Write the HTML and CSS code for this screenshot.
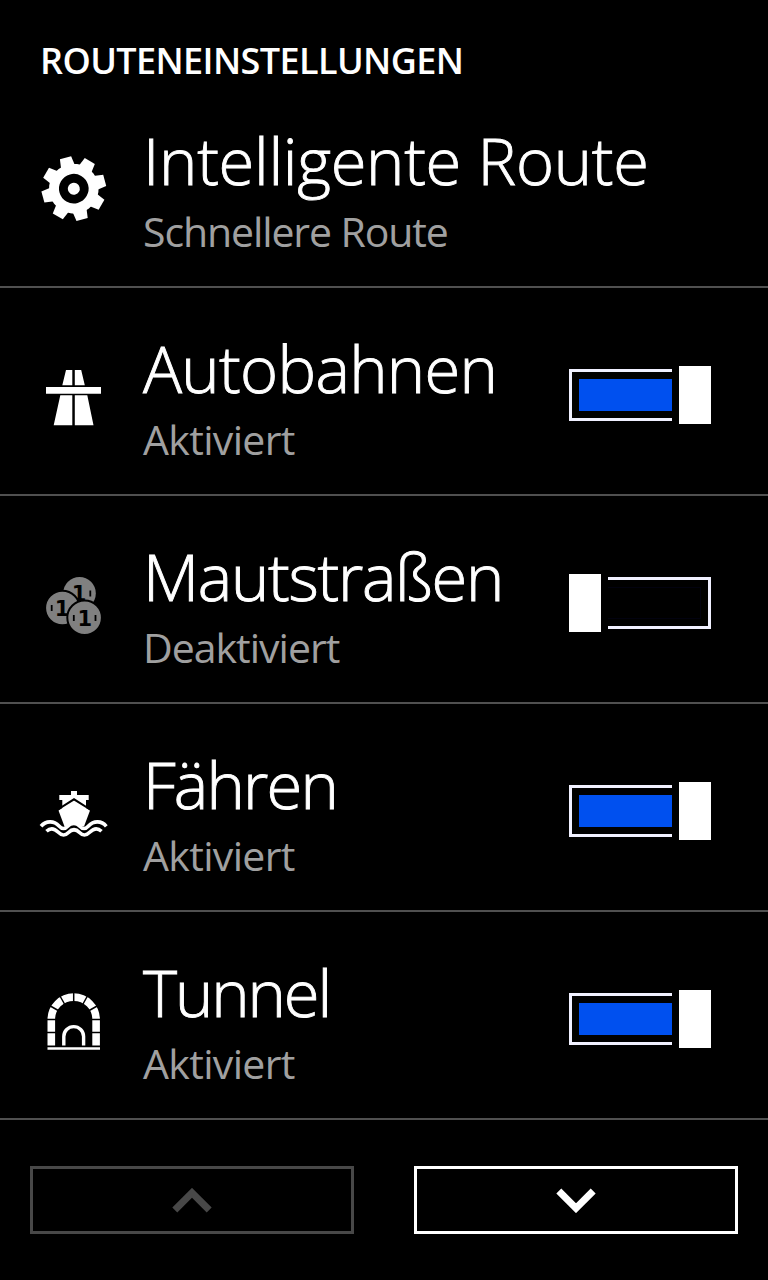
FILE: index.html
```
<!DOCTYPE html>
<html lang="de">
<head>
  <meta charset="UTF-8">
  <meta name="viewport" content="width=device-width, initial-scale=1.0">
  <title>Routeneinstellungen</title>
  <link rel="stylesheet" href="styles.css">
</head>
<body>

<h1 class="header">ROUTENEINSTELLUNGEN</h1>

<div class="list">
  <div class="row smart">
    <svg class="icon" viewBox="0 0 90 90">
      <g transform="translate(43.8 43.7) rotate(-15)">
        <path id="tooth" d="M-7.5 -20 L-5.8 -32 H5.8 L7.5 -20 V20 L5.8 32 H-5.8 L-7.5 20Z"/>
        <use href="#tooth" transform="rotate(45)"/>
        <use href="#tooth" transform="rotate(90)"/>
        <use href="#tooth" transform="rotate(135)"/>
        <circle r="24.8"/>
        <circle r="14.8" class="dark"/>
        <circle r="6"/>
      </g>
    </svg>
    <div class="text">
      <div class="title">Intelligente Route</div>
      <div class="status">Schnellere Route</div>
    </div>
  </div>

  <div class="row highways">
    <svg class="icon" viewBox="0 -2 90 90">
      <path d="M36 15H42.3V30.3H32.3Z M44.8 15H51.2L54.8 30.3H44.8Z"/>
      <path d="M16 32H71V38.7H16Z"/>
      <path d="M30.3 40.3H42.3V70.3H23.7Z M44.8 40.3H57.3L63.5 70.3H44.8Z"/>
    </svg>
    <div class="text">
      <div class="title">Autobahnen</div>
      <div class="status">Aktiviert</div>
    </div>
    <div class="toggle on">
      <div class="track"><div class="fill"></div></div>
      <div class="thumb"></div>
    </div>
  </div>

  <div class="row tolls">
    <svg class="icon coins" viewBox="0 1 90 90">
      <circle cx="49.5" cy="33.3" r="16.3"/>
      <text x="49" y="41">1</text>
      <path class="tick" d="M60.3 30.5V36.5"/>
      <circle class="coin" cx="32.4" cy="48" r="17.3"/>
      <text x="32" y="56">1</text>
      <path class="tick" d="M21.7 45V51"/>
      <circle class="coin" cx="54.6" cy="57.7" r="17.3"/>
      <text x="54.7" y="66">1</text>
      <path class="tick" d="M43.8 55V61 M65.5 55V61"/>
    </svg>
    <div class="text">
      <div class="title">Mautstraßen</div>
      <div class="status">Deaktiviert</div>
    </div>
    <div class="toggle off">
      <div class="thumb"></div>
      <div class="track"><div class="fill"></div></div>
    </div>
  </div>

  <div class="row ferries">
    <svg class="icon" viewBox="0 -6 90 90">
      <path d="M41 16H47V20H58.7V25H56V33H32.3V25H29.3V20H41Z"/>
      <path d="M44 25.5L60 35.6L54 51.5Q44 49 34.5 51.5L28.5 35.6Z"/>
      <path class="gap" d="M27 35L44 24.3L61 35"/>
      <path class="wave" d="M11 51.3C16 45.5 24 45.5 29 51C32 54.3 35 54.3 38 51C41.5 47.5 46 47.5 49.5 51C52.5 54.3 55.5 54.3 58.5 51C63.5 45.5 71.5 45.5 76.3 51.3"/>
      <path class="wave" d="M16.5 56.3C20 53 24 53 28 57C32 61 35 61 38.5 57.5C42 54 46 54 49.5 57.5C53 61 56 61 60 57C64 53 68 53 71.5 56.3"/>
    </svg>
    <div class="text">
      <div class="title">Fähren</div>
      <div class="status">Aktiviert</div>
    </div>
    <div class="toggle on">
      <div class="track"><div class="fill"></div></div>
      <div class="thumb"></div>
    </div>
  </div>

  <div class="row tunnels">
    <svg class="icon" viewBox="0 -3 90 90">
      <path class="arch" d="M21.3 65.5V39.5A22.4 22.4 0 0 1 66.1 39.5V65.5"/>
      <path class="joints" d="M16 39.5H27 M16 52.6H27 M60 39.5H72 M60 52.6H72 M43.7 12V23 M34.5 24L29.7 15.5 M28.2 30.5L19.5 25.5 M53 24L57.7 15.5 M59.2 30.5L68 25.5"/>
      <path class="door" d="M33.8 65.5V56.5A9.9 9.9 0 0 1 53.6 56.5V65.5"/>
      <path d="M17.5 67.2H70V69.8H17.5Z"/>
    </svg>
    <div class="text">
      <div class="title">Tunnel</div>
      <div class="status">Aktiviert</div>
    </div>
    <div class="toggle on">
      <div class="track"><div class="fill"></div></div>
      <div class="thumb"></div>
    </div>
  </div>
</div>

<div class="pager">
  <button class="page-btn" disabled>
    <svg class="chevron" viewBox="0 0 40 25"><path d="M2.8 22L20 4.8L37.2 22"/></svg>
  </button>
  <button class="page-btn">
    <svg class="chevron" viewBox="0 0 40 25"><path d="M2.8 3L20 20.2L37.2 3"/></svg>
  </button>
</div>

</body>
</html>
```
FILE: styles.css
```
* {
  margin: 0;
  padding: 0;
  box-sizing: border-box;
}
body {
  height: 1280px;
  overflow: hidden;
  background: #000;
  color: #fff;
  font-family: 'Open Sans', 'Noto Sans', sans-serif;
}
.header {
  height: 80px;
  padding: 36px 0 0 40px;
  font-size: 36px;
  line-height: 50px;
  font-weight: 600;
  letter-spacing: -0.6px;
}
.row {
  display: flex;
  align-items: flex-start;
  height: 208px;
  padding-left: 30px;
  border-bottom: 2px solid #505050;
}
.icon {
  width: 90px;
  height: 90px;
  margin-top: 65px;
  fill: #fff;
}
.dark {
  fill: #000;
}
.text {
  flex: 1;
  padding: 36px 0 0 23px;
  white-space: nowrap;
}
.title {
  font-size: 65px;
  line-height: 88px;
  font-weight: 350;
  -webkit-text-stroke: 0.9px #fff;
}
.status {
  font-size: 41px;
  line-height: 54px;
  letter-spacing: -0.65px;
  color: #a0a0a0;
}
.smart .title {
  letter-spacing: -0.3px;
}
.smart .status {
  letter-spacing: -1.1px;
}
.highways .title {
  letter-spacing: -0.7px;
}
.tolls .title {
  letter-spacing: -1.3px;
}
.tolls .status {
  letter-spacing: -1px;
}
.ferries .title {
  letter-spacing: -1.8px;
}
.tunnels .title {
  letter-spacing: -2.1px;
}

/* icon details */
.coins {
  fill: #808080;
}
.coin {
  stroke: #000;
  stroke-width: 2;
}
.coins text {
  font: bold 21px 'DejaVu Sans', sans-serif;
  text-anchor: middle;
  fill: #000;
}
.tick {
  stroke: #000;
  stroke-width: 1.8;
}
.gap {
  fill: none;
  stroke: #000;
  stroke-width: 2;
}
.wave {
  fill: none;
  stroke: #fff;
  stroke-width: 3.6;
}
.arch {
  fill: none;
  stroke: #fff;
  stroke-width: 7.6;
}
.joints {
  stroke: #000;
  stroke-width: 1.5;
}
.door {
  fill: none;
  stroke: #fff;
  stroke-width: 3.4;
}

/* switches */
.toggle {
  display: flex;
  align-items: center;
  justify-content: space-between;
  width: 142px;
  height: 58px;
  margin: 78px 57px 0 0;
}
.track {
  width: 103px;
  height: 52px;
  padding: 7px;
  border: 3px solid #f0f0ff;
}
.on .track {
  padding-right: 0;
  border-right: none;
}
.off .track {
  padding-left: 0;
  border-left: none;
}
.fill {
  height: 32px;
  background: #0050ef;
}
.off .fill {
  border: 1px solid #02020f;
  border-left: none;
  background: #000;
}
.thumb {
  width: 32px;
  height: 58px;
  background: #fff;
}

.pager {
  display: flex;
  gap: 60px;
  padding: 46px 30px 0;
}
.page-btn {
  display: flex;
  flex: 1;
  align-items: center;
  justify-content: center;
  height: 68px;
  border: 3px solid #fff;
  background: #000;
  color: #fff;
}
.page-btn:disabled {
  border-color: #484848;
  color: #484848;
}
.chevron {
  width: 40px;
  height: 25px;
  fill: none;
  stroke: currentColor;
  stroke-width: 7;
}
```
